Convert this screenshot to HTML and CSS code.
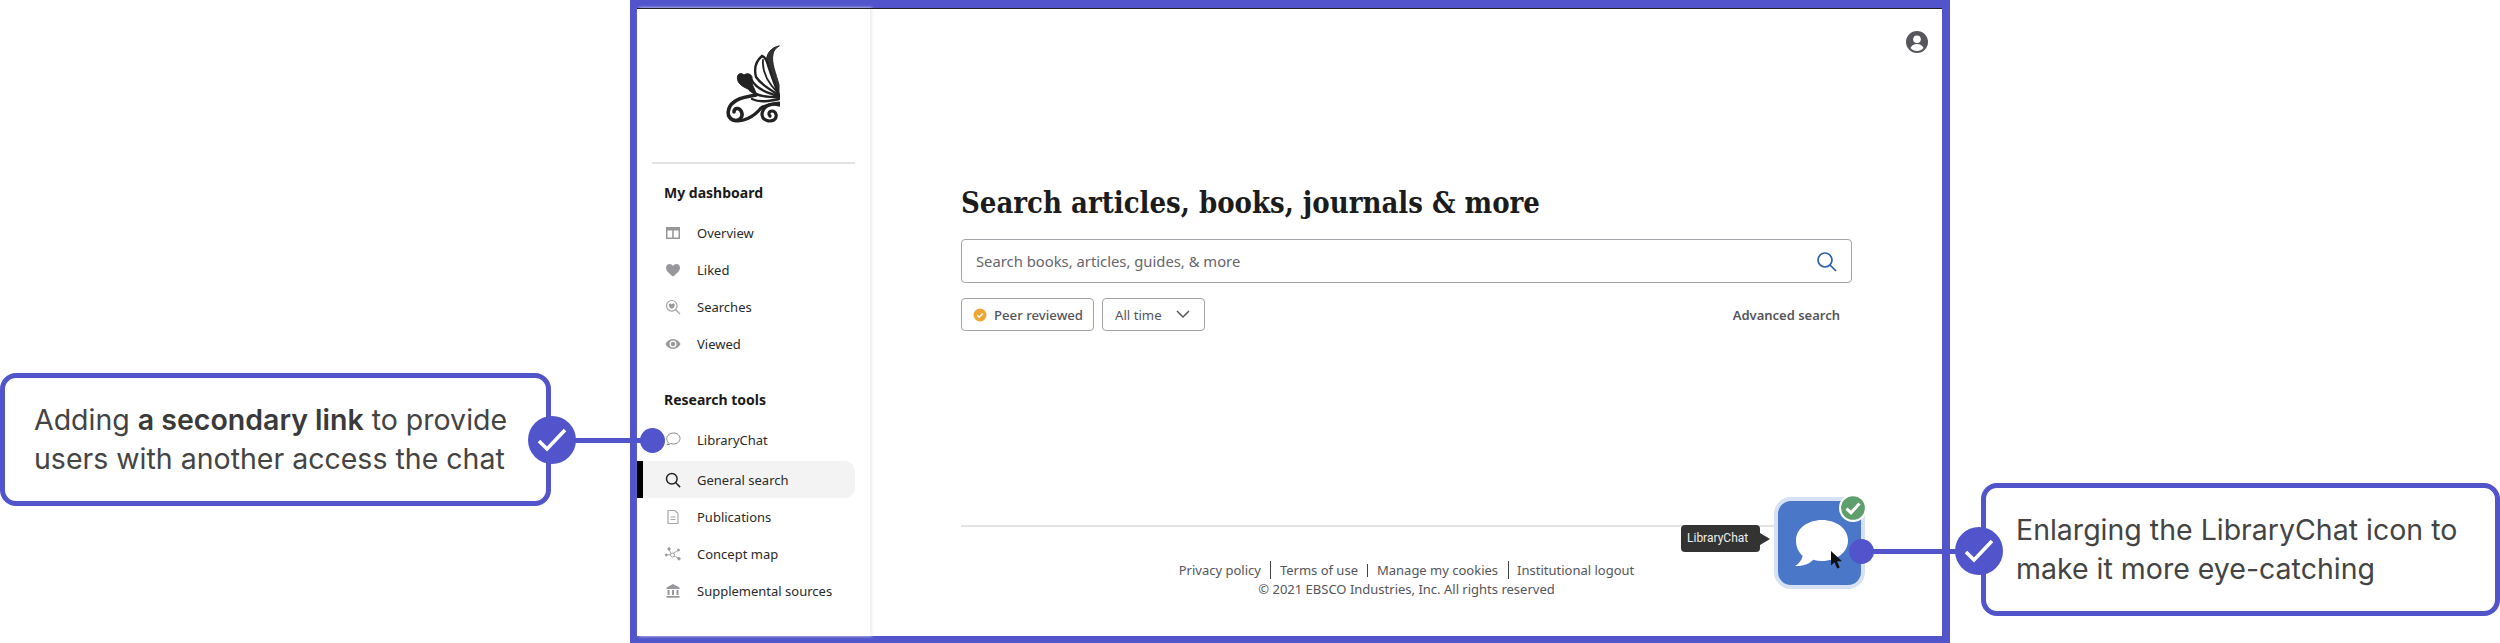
FILE: index.html
```html
<!DOCTYPE html>
<html lang="en">
<head>
  <meta charset="UTF-8">
  <title>LibraryChat annotations</title>
  <link rel="stylesheet" href="styles.css">
</head>
<body>
  <div class="page">
    <div class="callout callout-left">
      <p>Adding <strong>a secondary link</strong> to provide users with another access the chat</p>
    </div>

    <div class="frame">
      <aside class="sidebar">
        <div class="logo">
          <svg width="54" height="78" viewBox="0 0 54 78" fill="none" stroke="#222" stroke-width="2.4" stroke-linecap="round">
            <path d="M30 50C22 52 14 52 8 57C1 62 0 72 7 75C14 77 18 71 15 66C13 62 8 63 8 67" stroke-width="3.600"/>
            <path d="M7 75C16 78 28 72 35 63C40 60 46 59 53 58" stroke-width="3.200"/>
            <path d="M53 60C43 57 36 63 36 70C37 76 44 77 48 75C52 72 50 66 46 66C43 66 42 69 44 71" stroke-width="3.200"/>
            <path d="M29 48C24 44 14 42 12 36C10 31 13 26 18 30C22 27 27 30 26 34C25 39 28 42 30 48Z" fill="#222" stroke-width="1"/>
            <path d="M53 1C45 2 39 10 41 18C44 26 50 40 53 50L53 40C50 28 45 18 47 9C48 5 50 3 53 1Z" fill="#333" stroke-width="1"/>
            <path d="M36 11C30 16 28 24 30 32C34 38 46 46 53 50C48 38 44 26 42 20C41 16 39 12 36 11Z" stroke-width="2.400"/>
            <path d="M37 15C36 26 42 38 52 48" stroke-width="1.800"/>
            <path d="M25 34C29 42 40 48 53 51" stroke-width="2.400"/>
            <path d="M24 45C32 52 42 52 53 52" stroke-width="2.400"/>
            <path d="M26 54C34 58 44 56 53 54" stroke-width="2.400"/>
          </svg>
        </div>
        <hr class="divider">

        <h2 class="nav-title">My dashboard</h2>
        <ul class="nav">
          <li>
            <svg class="nav-icon" viewBox="0 0 16 16"><path d="M1 2h14v12H1zM2.500 5.500v7h4.700v-7zm6.300 0v7h4.700v-7z" fill-rule="evenodd"/></svg>
            Overview
          </li>
          <li>
            <svg class="nav-icon" viewBox="0 0 16 16"><path d="M8 14.500C3 10.500 1 8.400 1 5.700 1 3.500 2.700 2 4.600 2 6 2 7.300 2.800 8 4c.7-1.200 2-2 3.400-2C13.300 2 15 3.500 15 5.700c0 2.700-2 4.800-7 8.800z"/></svg>
            Liked
          </li>
          <li>
            <svg class="nav-icon" viewBox="0 0 16 16"><circle cx="6.800" cy="6.800" r="5.300" fill="none" stroke="#a4a4a8" stroke-width="1.200"/><path d="M10.800 10.800l4.200 4.200" stroke="#a4a4a8" stroke-width="1.300"/><path d="M6.800 10C4.800 8.400 3.800 7.400 3.800 6 3.800 4.500 5.900 4 6.800 5.400 7.700 4 9.800 4.500 9.800 6c0 1.400-1 2.400-3 4z"/></svg>
            Searches
          </li>
          <li>
            <svg class="nav-icon" viewBox="0 0 16 16"><path fill-rule="evenodd" d="M8 3C4.500 3 1.800 5.200.5 8c1.300 2.800 4 5 7.500 5s6.200-2.200 7.500-5C14.200 5.200 11.500 3 8 3zm0 1.500a3.500 3.500 0 1 1 0 7 3.500 3.500 0 0 1 0-7z"/><circle cx="8" cy="8" r="2.200"/></svg>
            Viewed
          </li>
        </ul>

        <h2 class="nav-title nav-title-tools">Research tools</h2>
        <ul class="nav">
          <li class="nav-chat">
            <svg class="nav-icon nav-icon-line" viewBox="0 0 16 16"><path d="M8.500 1c3.600 0 6.500 2.400 6.500 5.500S12.100 12 8.500 12c-1 0-2-.2-2.800-.5-1 .8-2.200 1.200-3.700 1.200.7-.6 1.200-1.400 1.300-2.500C2.300 9.200 1.800 7.900 1.800 6.500 1.800 3.400 4.900 1 8.500 1z" stroke="#777" stroke-width=".9"/></svg>
            LibraryChat
          </li>
          <li class="is-active">
            <svg class="nav-icon nav-icon-line" viewBox="0 0 16 16"><circle cx="6.800" cy="6.800" r="5.300" stroke="#222" stroke-width="1.500"/><path d="M10.800 10.800l4.300 4.300" stroke="#222" stroke-width="1.500"/></svg>
            General search
          </li>
          <li>
            <svg class="nav-icon nav-icon-line" viewBox="0 0 16 16" stroke="#a8a8ac" stroke-width="1.200"><path d="M3 1.500h7l3 3v10H3z"/><path d="M5.500 8h5M5.500 10.500h5"/></svg>
            Publications
          </li>
          <li>
            <svg class="nav-icon nav-icon-line" viewBox="0 0 16 16" stroke="#98989c" stroke-width=".9"><path d="M6.500 8.500L4 3.500M6.500 8.500L1.500 9M6.500 8.500L13 4.500M6.500 8.500l7.500 4"/><circle cx="7.500" cy="9" r="2" fill="#fff"/><circle cx="4" cy="3" r="1.200" fill="#98989c"/><circle cx="1.200" cy="9" r="1" fill="#98989c"/><circle cx="13.500" cy="4" r="1" fill="#98989c"/><circle cx="14" cy="12.800" r="1.200" fill="#98989c"/></svg>
            Concept map
          </li>
          <li>
            <svg class="nav-icon" viewBox="0 0 16 16"><path d="M8 1L1.500 4.500V6h13V4.500zM2.500 7h2v5h-2zM7 7h2v5H7zm4.500 0h2v5h-2zM1.500 13h13v1.800h-13z"/></svg>
            Supplemental sources
          </li>
        </ul>
      </aside>

      <main class="main">
        <div class="topbar">
          <svg width="22" height="22" viewBox="0 0 22 22"><circle cx="11" cy="11" r="11" fill="#56565c"/><circle cx="11" cy="8.200" r="3.800" fill="#fff"/><path d="M4.500 17c1-2.600 3.500-4 6.500-4s5.500 1.400 6.500 4c-1.600 1.900-4 3-6.500 3s-4.900-1.100-6.500-3z" fill="#fff"/></svg>
        </div>

        <section class="search">
          <h1>Search articles, books, journals &amp; more</h1>
          <div class="search-box">
            <span>Search books, articles, guides, &amp; more</span>
            <svg width="21" height="21" viewBox="0 0 21 21" fill="none" stroke="#2f5fb5" stroke-width="1.700"><circle cx="9" cy="9" r="7"/><path d="M14 14l6 6"/></svg>
          </div>
          <div class="filters">
            <button class="chip chip-peer">
              <svg width="14" height="14" viewBox="0 0 14 14"><circle cx="7" cy="7" r="6.500" fill="#eea735"/><path d="M4.200 7.200l2 2 3.600-3.800" fill="none" stroke="#fff" stroke-width="1.500"/></svg>
              Peer reviewed
            </button>
            <button class="chip chip-time">
              All time
              <svg width="14" height="9" viewBox="0 0 14 9" fill="none" stroke="#55555b" stroke-width="1.500"><path d="M1 1l6 6 6-6"/></svg>
            </button>
            <a class="advanced">Advanced search</a>
          </div>
        </section>

        <footer class="footer">
          <div class="footer-links">
            <a>Privacy policy</a>
            <a class="sep-tall">Terms of use</a>
            <a class="sep-short">Manage my cookies</a>
            <a class="sep-tall">Institutional logout</a>
          </div>
          <p>© 2021 EBSCO Industries, Inc. All rights reserved</p>
        </footer>

        <div class="chat-tip">LibraryChat</div>
        <div class="chat-tile">
          <svg class="chat-bubble" width="58" height="52" viewBox="0 0 58 52"><path d="M30 1c14.500 0 26 8.800 26 20.500S44.500 42 30 42c-3 0-6-.4-8.700-1.200C17.500 45 11 47.500 3 47c3.800-2.200 6.600-5.500 7.700-10C6.500 33.200 4 27.800 4 21.500 4 9.800 15.500 1 30 1z" fill="#fff"/></svg>
          <svg class="chat-cursor" width="13" height="18" viewBox="0 0 13 18"><path d="M1 0v14.500l3.500-3.300 2.700 6.300 2.500-1-2.700-6.200H12z" fill="#111"/></svg>
          <svg class="chat-badge" width="28" height="28" viewBox="0 0 26 26"><circle cx="13" cy="13" r="12" fill="#5f9f6b" stroke="#fff" stroke-width="2"/><path d="M7 13.500l4.200 4L19 8.800" fill="none" stroke="#fff" stroke-width="2.800"/></svg>
        </div>
      </main>
    </div>

    <div class="callout callout-right">
      <p>Enlarging the LibraryChat icon to make it more eye-catching</p>
    </div>

    <div class="link-line link-left"></div>
    <div class="link-line link-right"></div>
    <div class="dot dot-left"></div>
    <div class="dot dot-right"></div>
    <div class="check check-left">
      <svg width="30" height="26" viewBox="0 0 30 26" fill="none" stroke="#fff" stroke-width="3.600"><path d="M2 14l8 8L28 3"/></svg>
    </div>
    <div class="check check-right">
      <svg width="30" height="26" viewBox="0 0 30 26" fill="none" stroke="#fff" stroke-width="3.600"><path d="M2 14l8 8L28 3"/></svg>
    </div>
  </div>
</body>
</html>
```

FILE: styles.css
```css
* {
  box-sizing: border-box;
}
body {
  margin: 0;
  background: #fff;
  font-family: 'Noto Sans', sans-serif;
  color: #222;
}
.page {
  position: relative;
  display: flex;
  align-items: flex-start;
  width: 2500px;
  height: 643px;
  overflow: hidden;
}

/* callouts */
.callout {
  display: flex;
  align-items: center;
  height: 133px;
  border: 5px solid #5254cc;
  border-radius: 16px;
  font-family: Inter, sans-serif;
  font-size: 28.500px;
  line-height: 38.500px;
  color: #444;
}
.callout p {
  margin: 0;
}
.callout strong {
  font-weight: 600;
  color: #3a3a3a;
}
.callout-left {
  flex: none;
  width: 551px;
  margin-top: 373px;
  padding-left: 29px;
  padding-right: 30px;
}
.callout-right {
  flex: none;
  width: 519px;
  margin-top: 483px;
  margin-left: 31px;
  padding-left: 30px;
  padding-right: 30px;
}

/* app frame */
.frame {
  flex: none;
  display: flex;
  width: 1320px;
  height: 643px;
  margin-left: 79px;
  border: 8px solid #5254cc;
  border-left-width: 7px;
  border-bottom-width: 7px;
}
.sidebar {
  flex: none;
  width: 233px;
  border-top: 1px solid #222;
  box-shadow: 2px 0 3px #eee;
}
.logo {
  display: flex;
  align-items: center;
  justify-content: center;
  height: 153px;
  padding-bottom: 4px;
  padding-right: 2px;
}
.divider {
  height: 2px;
  margin: 0 15px;
  border: none;
  background: #e2e2e4;
}
.nav-title {
  margin: 19px 0 11px 27px;
  font-size: 14px;
  font-weight: 700;
  line-height: 20px;
  color: #1a1a1a;
}
.nav-title-tools {
  margin-top: 28px;
  margin-bottom: 11px;
}
.nav {
  margin: 0;
  padding: 0;
  list-style: none;
}
.nav li {
  display: flex;
  align-items: center;
  gap: 16px;
  height: 37px;
  padding-left: 28px;
  font-size: 13px;
  color: #2a2a2a;
}
.nav .nav-chat {
  margin-bottom: 3px;
}
.nav .is-active {
  width: 218px;
  border-left: 6px solid #000;
  border-radius: 0 10px 10px 0;
  padding-left: 22px;
  background: #f3f3f3;
}
.nav-icon {
  flex: none;
  width: 16px;
  height: 16px;
  fill: #98989c;
}
.nav-icon-line {
  fill: none;
}

.main {
  position: relative;
  flex: 1;
  display: flex;
  flex-direction: column;
  border-top: 1px solid #222;
}
.topbar {
  display: flex;
  justify-content: flex-end;
  padding: 22px 14px 0 0;
}
.search {
  margin: 0 90px 0 91px;
}
.search h1 {
  margin: 130px 0 16px;
  font-family: 'DejaVu Serif Condensed', 'DejaVu Serif', serif;
  font-size: 29px;
  font-weight: 700;
  line-height: 40px;
  color: #1c1c1c;
}
.search-box {
  display: flex;
  align-items: center;
  justify-content: space-between;
  height: 44px;
  padding: 0 14px;
  border: 1.500px solid #a2a2a8;
  border-radius: 4px;
  font-size: 14.800px;
  color: #66666c;
}
.filters {
  display: flex;
  align-items: center;
  gap: 8px;
  margin-top: 15px;
}
.chip {
  display: flex;
  align-items: center;
  height: 33px;
  border: 1.500px solid #a2a2a8;
  border-radius: 4px;
  background: #fff;
  font-family: 'Noto Sans', sans-serif;
  font-size: 13.200px;
  color: #55555b;
}
.chip-peer {
  gap: 7px;
  width: 133px;
  padding: 0 0 0 11px;
  font-weight: 500;
}
.chip-time {
  gap: 14px;
  width: 103px;
  padding: 0 0 0 12px;
}
.advanced {
  margin-left: auto;
  padding-right: 12px;
  font-size: 13px;
  font-weight: 600;
  color: #55555b;
}

.footer {
  margin: auto 90px 0 91px;
  padding: 34px 0 37px;
  border-top: 2px solid #e4e4e6;
  font-size: 13px;
  line-height: 19px;
  text-align: center;
  color: #55555b;
}
.footer p {
  margin: 0;
}
.footer-links {
  display: flex;
  justify-content: center;
  align-items: center;
}
.footer-links a {
  position: relative;
  padding: 0 9.500px;
}
.sep-tall::before,
.sep-short::before {
  content: "";
  position: absolute;
  left: 0;
  width: 1px;
  background: #444;
}
.sep-tall::before {
  top: 0;
  height: 18px;
}
.sep-short::before {
  top: 3px;
  height: 13px;
}

/* floating chat button */
.chat-tile {
  position: absolute;
  left: 904px;
  top: 488px;
  width: 91px;
  height: 92px;
  border: 4px solid #d6e1f5;
  border-radius: 17px;
  background: #4a77c8;
}
.chat-bubble {
  position: absolute;
  left: 14px;
  top: 18px;
}
.chat-cursor {
  position: absolute;
  left: 52px;
  top: 50px;
}
.chat-badge {
  position: absolute;
  left: 61px;
  top: -7px;
}
.chat-tip {
  position: absolute;
  left: 811px;
  top: 516px;
  width: 79px;
  height: 27px;
  padding-left: 6px;
  border-radius: 4px;
  background: #333;
  font-family: Roboto, sans-serif;
  font-size: 12px;
  line-height: 27px;
  color: #eee;
}
.chat-tip::after {
  content: "";
  position: absolute;
  left: 79px;
  top: 8px;
  border-left: 10px solid #333;
  border-top: 6px solid transparent;
  border-bottom: 6px solid transparent;
}

/* annotation marks over the frame */
.link-line {
  position: absolute;
  height: 5px;
  background: #5254cc;
}
.link-left {
  left: 560px;
  top: 438px;
  width: 92px;
}
.link-right {
  left: 1861px;
  top: 549px;
  width: 119px;
}
.dot {
  position: absolute;
  width: 25px;
  height: 25px;
  border-radius: 50%;
  background: #5254cc;
}
.dot-left {
  left: 640px;
  top: 428px;
}
.dot-right {
  left: 1849px;
  top: 539px;
}
.check {
  position: absolute;
  display: flex;
  align-items: center;
  justify-content: center;
  width: 48px;
  height: 48px;
  border-radius: 50%;
  background: #5254cc;
}
.check-left {
  left: 528px;
  top: 416px;
}
.check-right {
  left: 1955px;
  top: 527px;
}
```
